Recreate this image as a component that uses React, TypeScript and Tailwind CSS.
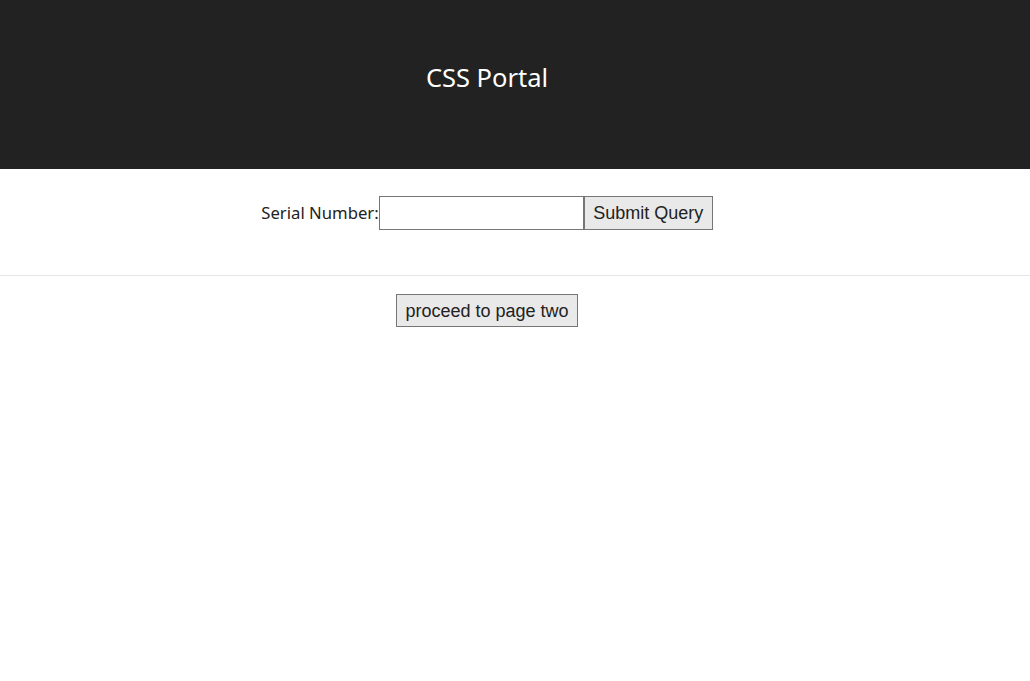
const App = () => {
  return (
    <div className="min-h-screen bg-white font-['Noto_Sans',sans-serif]">
      <header className="flex h-[169px] items-center justify-center bg-[#222222] pb-[14px] pr-[56px]">
        <h1 className="text-[25.5px] leading-none text-white">CSS Portal</h1>
      </header>

      <form className="flex h-[106px] items-start justify-center pr-[56px] pt-[27px]">
        <label className="flex items-center text-[16.7px] text-[#222]">
          <span>Serial Number:</span>
          <input
            type="text"
            className="h-[34px] w-[205px] border border-[#767676] bg-white px-1 outline-none"
          />
        </label>
        <button
          type="button"
          className="h-[34px] w-[129px] border border-[#767676] bg-[#e9e9e9] font-['Liberation_Sans',sans-serif] text-[18px] text-[#222]"
        >
          Submit Query
        </button>
      </form>

      <hr className="border-t border-[#e5e5e5]" />

      <div className="flex justify-center pr-[56px] pt-[18px]">
        <button
          type="button"
          className="h-[33px] w-[182px] border border-[#767676] bg-[#e9e9e9] pt-[2px] font-['Liberation_Sans',sans-serif] text-[18px] text-[#222]"
        >
          proceed to page two
        </button>
      </div>
    </div>
  );
};

export default App;
